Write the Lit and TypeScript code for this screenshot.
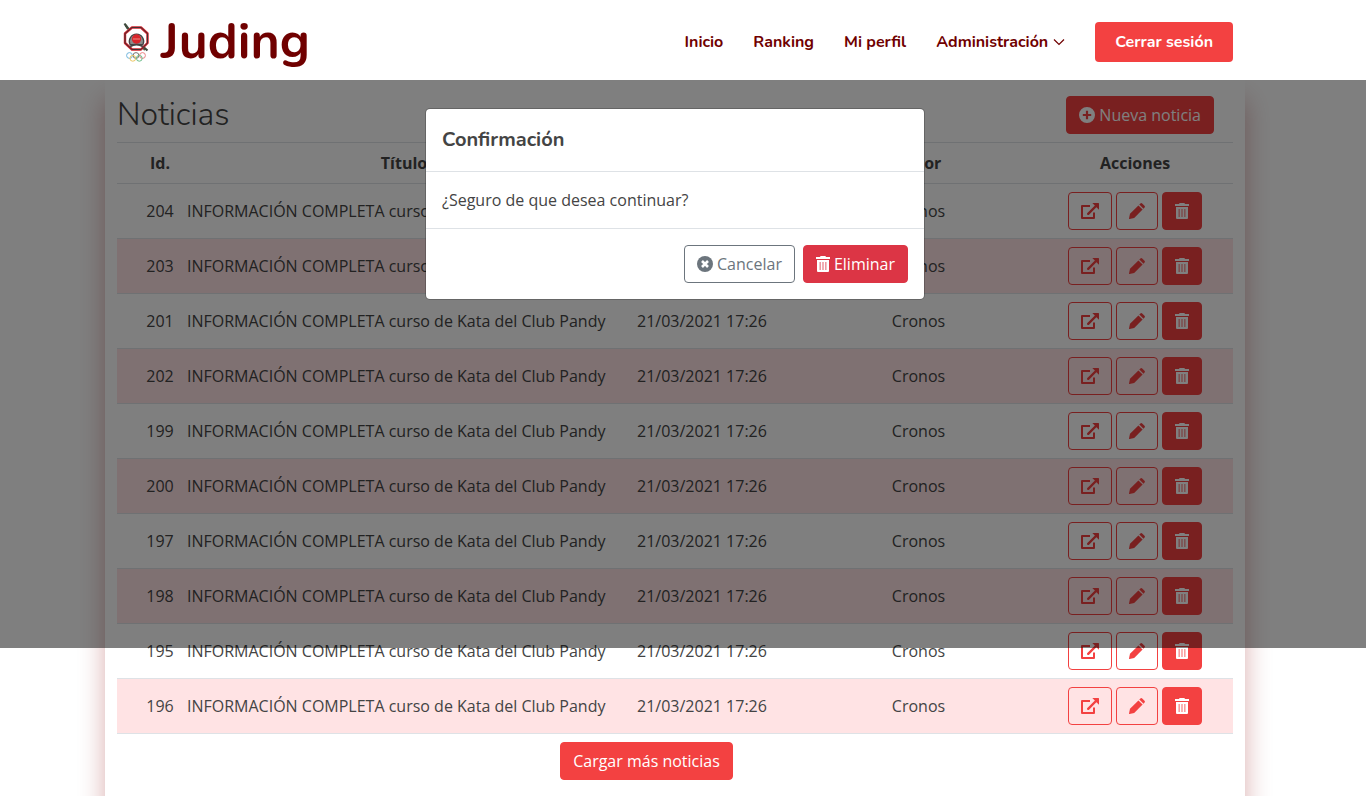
import { LitElement, html, svg, css } from "lit";
import { customElement, state } from "lit/decorators.js";

const iconExternal = html`<svg class="icon" width="18" height="16" viewBox="0 0 18 16" aria-hidden="true">
  <path d="M9 3H1v12h12V9.500" fill="none" stroke="currentColor" stroke-width="2" stroke-linejoin="round"/>
  <path d="M7.200 10.800 15 3" fill="none" stroke="currentColor" stroke-width="2.400" stroke-linecap="round"/>
  <path d="M11.300 0h6.200q.5 0 .5.5v6.200L15.900 4.700 13.300 2.100Z" fill="currentColor"/>
</svg>`;
const iconPencil = html`<svg class="icon" width="16" height="16" viewBox="0 0 16 16" aria-hidden="true">
  <path d="M9.400 2.400 13.600 6.600 5.200 15 .6 16Q0 16 0 15.400L1 10.800Z" fill="currentColor"/>
  <path d="M10.300 1.500 11.400.5q.9-.9 1.800 0l2.300 2.300q.9.900 0 1.800L14.500 5.700Z" fill="currentColor"/>
</svg>`;
const iconTrash = html`<svg class="icon" width="14" height="16" viewBox="0 0 14 16" aria-hidden="true">
  <path d="M0 1h4L4.600 0h4.800L10 1h4v2H0Z" fill="currentColor"/>
  <path fill-rule="evenodd" d="M1 4h12v11q0 1-1 1H2q-1 0-1-1ZM3.700 6v8h.8V6ZM6.600 6v8h.8V6ZM9.500 6v8h.8V6Z" fill="currentColor"/>
</svg>`;
const iconPlus = html`<svg class="icon" width="16" height="16" viewBox="0 0 16 16" aria-hidden="true">
  <path fill-rule="evenodd" d="M8 0a8 8 0 1 0 0 16A8 8 0 0 0 8 0ZM6.900 3.800h2.200v3.100h3.100v2.200H9.100v3.100H6.900V9.100H3.800V6.900h3.100Z" fill="currentColor"/>
</svg>`;
const iconTimes = html`<svg class="icon" width="16" height="16" viewBox="0 0 16 16" aria-hidden="true">
  <circle cx="8" cy="8" r="8" fill="currentColor"/>
  <path d="m5 5 6 6m0-6-6 6" stroke="#fff" stroke-width="2.600"/>
</svg>`;
const ring = (cx: number, cy: number, color: string) =>
  svg`<circle cx=${cx} cy=${cy} r="2.9" fill="none" stroke=${color} stroke-width="1"/>`;
const logo = html`<svg class="logo" width="38" height="40" viewBox="0 0 38 40" aria-hidden="true">
  <path d="M8.500 3 28 28" stroke="#4b5a48" stroke-width="2.200"/>
  <path d="M15 5.500h9l6.500 6v9.500l-6.500 6.500h-9L8 21v-9.500Z" fill="#fff" stroke="#d0202b" stroke-width="2.400" stroke-linejoin="round"/>
  <path d="M15 5.500h9l6.500 6v9.500l-6.500 6.500h-9L8 21v-9.500Z" fill="none" stroke="#333" stroke-width=".9" stroke-linejoin="round"/>
  <path d="M13 22.500a7.200 7.200 0 1 1 13 0Z" fill="#8a8a8a" stroke="#444" stroke-width="1.200"/>
  <path d="M13 24.500q6.500-4 13 0" fill="none" stroke="#444" stroke-width="2"/>
  <circle cx="19.500" cy="17" r="4.700" fill="#d8262c"/>
  <path d="M16 17h7" stroke="#ef8a80"/>
  <path d="m27 25.500 3.500 3M7.500 1.500 11 7" stroke="#3f4a3d" stroke-width="2.200"/>
  ${ring(12.5, 33.5, "#6fb4dc")}${ring(19, 33.5, "#777")}${ring(25.5, 33.5, "#e98080")}
  ${ring(15.8, 36.3, "#ecc765")}${ring(22.3, 36.3, "#6dbd8a")}
</svg>`;

interface Noticia { id: number; titulo: string; fecha: string; autor: string; }

@customElement("app-root")
export class AppRoot extends LitElement {
  @state() private noticias: Noticia[] = [204, 203, 201, 202, 199, 200, 197, 198, 195, 196].map((id) => ({
    id,
    titulo: "INFORMACIÓN COMPLETA curso de Kata del Club Pandy",
    fecha: "21/03/2021 17:26",
    autor: "Cronos",
  }));

  static styles = css`
    :host {
      display: block;
      position: relative;
      height: 100vh;
      overflow: hidden;
      background: #fff;
      color: #444;
      font: 400 16px/24px "Open Sans", sans-serif;
    }
    * { box-sizing: border-box; }
    .header {
      position: relative;
      z-index: 3;
      background: #fff;
      height: 80px;
      padding: 4px 16px 0 0;
      display: flex;
    }
    .bar {
      flex: 1;
      max-width: 1140px;
      margin: 0 auto;
      padding: 0 12px;
      display: flex;
      align-items: center;
      justify-content: space-between;
      font-family: Nunito, Lato, sans-serif;
    }
    .brand {
      display: flex;
      align-items: center;
      gap: 6px;
      color: #700000;
      text-decoration: none;
      font-size: 50px;
      line-height: 56px;
      font-weight: 700;
    }
    .nav { display: flex; align-items: center; gap: 30px; font-weight: 700; }
    .link { display: flex; align-items: center; gap: 5px; color: #700000; text-decoration: none; }
    button { font: inherit; cursor: pointer; }
    .logout {
      height: 40px;
      padding: 0 20px;
      border: 0;
      border-radius: 4px;
      background: #f34141;
      color: #fff;
      font-weight: 700;
    }
    .page { padding-right: 16px; }
    .card {
      max-width: 1140px;
      min-height: 100vh;
      margin: 0 auto;
      padding: 16px 12px;
      background: #fff;
      box-shadow: 0 20px 25px rgba(139, 0, 0, 0.32);
    }
    .top { display: flex; justify-content: space-between; align-items: center; padding-right: 19px; margin-bottom: 8px; }
    h1 { margin: 0; font: 300 32px/38px Nunito, Lato, sans-serif; }
    .btn {
      display: inline-flex;
      align-items: center;
      gap: 4px;
      height: 38px;
      padding: 0 12px;
      border: 1px solid #f34141;
      border-radius: 4px;
      background: #f34141;
      color: #fff;
    }
    .outline { background: transparent; color: #f34141; }
    .gray { background: transparent; border-color: #6c757d; color: #6c757d; }
    .danger { background: #dc3545; border-color: #dc3545; }
    .icon { display: block; flex: none; }
    table { width: 100%; table-layout: fixed; border-collapse: separate; border-spacing: 0; border-top: 1px solid #dee2e6; }
    .c-id { width: 62px; }
    .c-date { width: 171px; }
    .c-author { width: 237px; }
    .c-actions { width: 196px; }
    th, td { padding: 8px; border-bottom: 1px solid #dee2e6; text-align: center; white-space: nowrap; }
    th { font-weight: 700; }
    .id { padding: 8px 4px 8px 28px; }
    .left { text-align: left; }
    tbody tr:nth-child(even) { background: #ffe3e4; }
    .actions { display: flex; justify-content: center; gap: 4px; }
    .more { display: flex; justify-content: center; padding: 8px 57px 0 0; }
    .backdrop {
      position: absolute;
      z-index: 1;
      top: 0;
      left: 0;
      right: 0;
      height: 648px;
      background: rgba(0, 0, 0, 0.5);
    }
    .layer {
      position: absolute;
      z-index: 2;
      top: 108px;
      left: 0;
      right: 16px;
      display: flex;
      justify-content: center;
    }
    .modal {
      width: 500px;
      background: #fff;
      background-clip: padding-box;
      border: 1px solid rgba(0, 0, 0, 0.2);
      border-radius: 5px;
    }
    .modal h2 { margin: 0; padding: 16px; border-bottom: 1px solid #dee2e6; font: 700 20px/30px Nunito, Lato, sans-serif; }
    .modal p { margin: 0; padding: 16px; border-bottom: 1px solid #dee2e6; }
    .foot { display: flex; justify-content: flex-end; gap: 8px; padding: 16px; }
  `;

  private row(n: Noticia) {
    return html`<tr>
      <td class="id">${n.id}</td>
      <td class="left">${n.titulo}</td>
      <td class="left">${n.fecha}</td>
      <td>${n.autor}</td>
      <td>
        <div class="actions">
          <button class="btn outline" aria-label="Abrir">${iconExternal}</button>
          <button class="btn outline" aria-label="Editar">${iconPencil}</button>
          <button class="btn" aria-label="Eliminar">${iconTrash}</button>
        </div>
      </td>
    </tr>`;
  }

  render() {
    return html`
      <header class="header">
        <div class="bar">
          <a class="brand" href="#">${logo}<span>Juding</span></a>
          <nav class="nav">
            <a class="link" href="#">Inicio</a>
            <a class="link" href="#">Ranking</a>
            <a class="link" href="#">Mi perfil</a>
            <a class="link" href="#">Administración
              <svg width="12" height="12" viewBox="0 0 12 12" aria-hidden="true"><path d="m1 3.500 5 5 5-5" fill="none" stroke="currentColor" stroke-width="1.200"/></svg>
            </a>
            <button class="logout">Cerrar sesión</button>
          </nav>
        </div>
      </header>
      <main class="page">
        <section class="card">
          <div class="top">
            <h1>Noticias</h1>
            <button class="btn">${iconPlus}Nueva noticia</button>
          </div>
          <table>
            <colgroup><col class="c-id" /><col /><col class="c-date" /><col class="c-author" /><col class="c-actions" /></colgroup>
            <thead>
              <tr><th class="id">Id.</th><th>Título</th><th>Fecha</th><th>Autor</th><th>Acciones</th></tr>
            </thead>
            <tbody>${this.noticias.map((n) => this.row(n))}</tbody>
          </table>
          <div class="more"><button class="btn">Cargar más noticias</button></div>
        </section>
      </main>
      <div class="backdrop"></div>
      <div class="layer">
        <div class="modal" role="dialog" aria-modal="true" aria-labelledby="confirm-title">
          <h2 id="confirm-title">Confirmación</h2>
          <p>¿Seguro de que desea continuar?</p>
          <div class="foot">
            <button class="btn gray">${iconTimes}Cancelar</button>
            <button class="btn danger">${iconTrash}Eliminar</button>
          </div>
        </div>
      </div>
    `;
  }
}
